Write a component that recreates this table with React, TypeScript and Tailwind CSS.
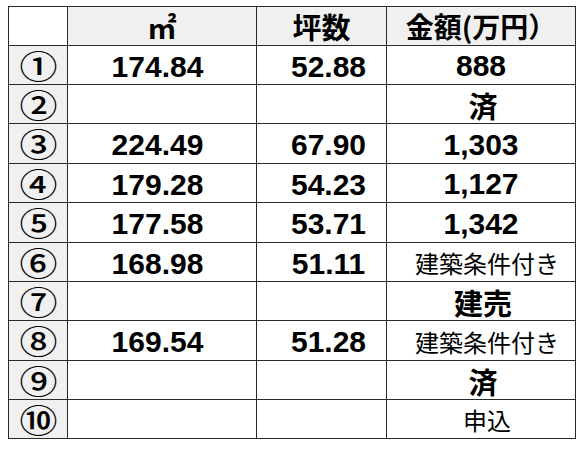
const rows: { no: string; m2: string; tsubo: string; price: string; kind: "num" | "big" | "small" }[] = [
  { no: "①", m2: "174.84", tsubo: "52.88", price: "888", kind: "num" },
  { no: "②", m2: "", tsubo: "", price: "済", kind: "big" },
  { no: "③", m2: "224.49", tsubo: "67.90", price: "1,303", kind: "num" },
  { no: "④", m2: "179.28", tsubo: "54.23", price: "1,127", kind: "num" },
  { no: "⑤", m2: "177.58", tsubo: "53.71", price: "1,342", kind: "num" },
  { no: "⑥", m2: "168.98", tsubo: "51.11", price: "建築条件付き", kind: "small" },
  { no: "⑦", m2: "", tsubo: "", price: "建売", kind: "big" },
  { no: "⑧", m2: "169.54", tsubo: "51.28", price: "建築条件付き", kind: "small" },
  { no: "⑨", m2: "", tsubo: "", price: "済", kind: "big" },
  { no: "⑩", m2: "", tsubo: "", price: "申込", kind: "small" },
];

const num = "font-['Liberation_Sans',sans-serif] font-bold text-[30px] leading-none";
const jp = "font-['Noto_Sans_CJK_JP',sans-serif]";

export default function App() {
  return (
    <div className="min-h-screen bg-white pt-[6px] pl-[8px]">
      <div className="grid w-fit grid-cols-[58px_188px_129px_188px] grid-rows-[38px_38px_38px_39px_38px_39px_38px_38px_39px_38px_38px] gap-px bg-[#2a2a2a] p-px text-black">
        {/* HEADER */}
        <div className="bg-white" />
        <div className={`flex items-center justify-center bg-[#f0f0f0] ${jp} text-[29px] font-bold leading-none`}>
          ㎡
        </div>
        <div className={`flex items-center justify-center bg-[#f0f0f0] ${jp} text-[29px] font-bold leading-none`}>
          坪数
        </div>
        <div className={`flex items-center justify-center bg-[#f0f0f0] ${jp} text-[28px] font-bold leading-none`}>
          金額(万円）
        </div>

        {/* BODY */}
        {rows.map((r) => (
          <>
            <div key={r.no + "a"} className="flex items-center justify-center bg-[#f0f0f0]">
              <span className={`${jp} inline-block scale-x-[1.15] text-[33px] font-medium leading-[33px]`}>{r.no}</span>
            </div>
            <div key={r.no + "b"} className={`flex items-center justify-center bg-white pt-[3px] pr-[9px] ${num}`}>
              {r.m2}
            </div>
            <div key={r.no + "c"} className={`flex items-center justify-center bg-white pt-[3px] pl-[14px] ${num}`}>
              {r.tsubo}
            </div>
            <div key={r.no + "d"} className="flex items-center justify-center bg-white pt-[2px]">
              {r.kind === "num" && <span className={num}>{r.price}</span>}
              {r.kind === "big" && (
                <span className={`${jp} pl-[4px] text-[29px] font-bold leading-none`}>{r.price}</span>
              )}
              {r.kind === "small" && (
                <span className={`${jp} pl-[12px] text-[24px] leading-none`}>{r.price}</span>
              )}
            </div>
          </>
        ))}
      </div>
    </div>
  );
}
